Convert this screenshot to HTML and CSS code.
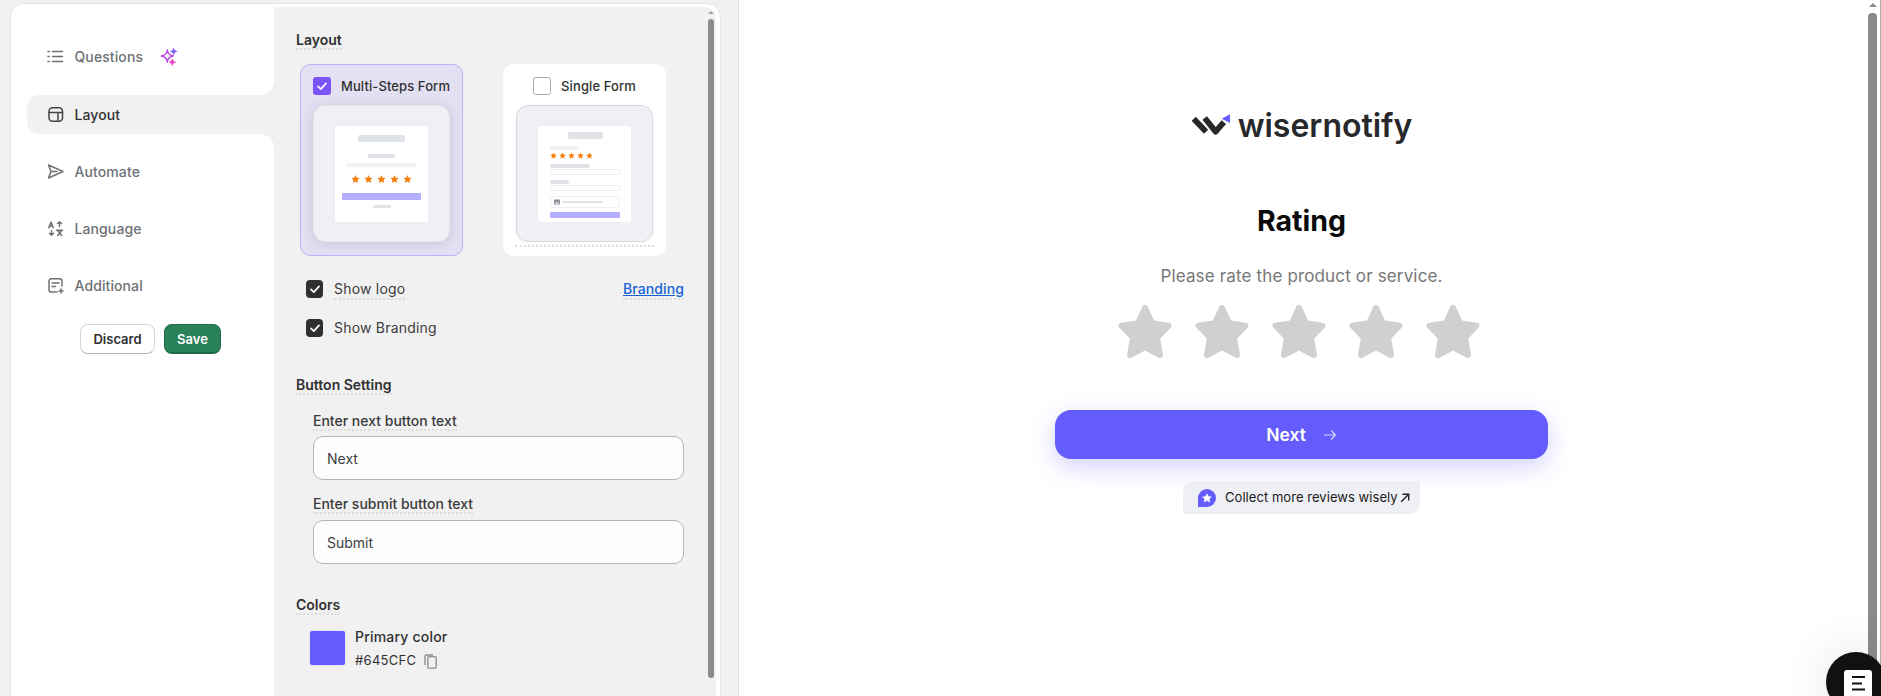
FILE: index.html
```html
<!DOCTYPE html>
<html lang="en">
<head>
    <meta charset="UTF-8">
    <meta name="viewport" content="width=device-width, initial-scale=1.0">
    <title>Rating form builder</title>
    <link rel="stylesheet" href="styles.css">
</head>
<body>
    <svg class="sprites" width="0" height="0">
        <symbol id="mini-star" viewBox="0 0 24 24">
            <polygon points="12,1.5 15.3,8.6 23,9.6 17.3,14.9 18.8,22.5 12,18.7 5.2,22.5 6.7,14.9 1,9.6 8.7,8.6"/>
        </symbol>
        <symbol id="big-star" viewBox="0 0 54 54">
            <polygon points="27,3 34.05,18.3 50.5,20.6 39,32.5 42,50 27,42 12,50 15,32.5 3.5,20.6 19.95,18.3" stroke-width="6" stroke-linejoin="round"/>
        </symbol>
        <symbol id="tick" viewBox="0 0 18 18">
            <path d="M5 9.4l2.8 2.7L13 6.4" fill="none" stroke="#fff" stroke-width="1.7" stroke-linecap="round" stroke-linejoin="round"/>
        </symbol>
    </svg>

    <div class="editor">
        <div class="card">
            <nav class="sidebar">
                <div class="nav-block nav-top">
                    <a class="nav-item">
                        <svg class="nav-icon" viewBox="0 0 17 17"><path d="M5.5 3.5h10M5.5 8.500h10M5.5 13.500h10M1 3.500h1.200M1 8.500h1.200M1 13.500h1.200"/></svg>
                        Questions
                        <svg class="sparkle" viewBox="0 0 18 18">
                            <path d="M7.3 2Q8 7.3 13.3 8 8 8.700 7.300 14 6.600 8.700 1.300 8 6.600 7.300 7.300 2Z" fill="none" stroke="#b743e8" stroke-width="1.400" stroke-linejoin="round"/>
                            <path d="M13.7 0Q14.100 3 17.200 3.400 14.100 3.800 13.700 6.800 13.300 3.800 10.300 3.400 13.300 3 13.700 0Z" fill="#7a5cf5" stroke="#7a5cf5" stroke-width="0.5"/>
                            <path d="M12.3 10.800Q12.700 13.800 15.800 14.200 12.700 14.600 12.300 17.600 11.900 14.600 8.900 14.200 11.900 13.800 12.300 10.800Z" fill="#ee3bc4" stroke="#ee3bc4" stroke-width="0.5"/>
                        </svg>
                    </a>
                </div>
                <div class="nav-active-row">
                    <a class="nav-item active">
                        <svg class="nav-icon" viewBox="0 0 17 17"><rect x="2" y="1.800" width="13.500" height="13.500" rx="3.500"/><path d="M2 6.500h13.500M11 6.500v8.800"/></svg>
                        Layout
                    </a>
                </div>
                <div class="nav-block nav-bottom">
                    <a class="nav-item">
                        <svg class="nav-icon" viewBox="0 0 17 17"><path d="M1.500 2l14.500 6.500L1.500 15 4 8.500zM4 8.500h6"/></svg>
                        Automate
                    </a>
                    <a class="nav-item">
                        <svg class="nav-icon" viewBox="0 0 17 17"><path d="M1.800 7.800L4 2l2.200 5.800M2.600 6h2.800M12.500 6.500V1.800M10.500 3.500l2-1.800 2 1.800M4.500 15.300v-4.500M2.500 13.300l2 1.800 2-1.800M9.500 10.300h6M10.700 10.500l4 5M14.700 10.500l-4 5"/></svg>
                        Language
                    </a>
                    <a class="nav-item">
                        <svg class="nav-icon" viewBox="0 0 17 17"><path d="M15 9V4a2.200 2.200 0 0 0-2.200-2.200H4.200A2.200 2.200 0 0 0 2 4v8.800A2.200 2.200 0 0 0 4.200 15H10M5 6h7M5 9.500h3.500M14 12v4M12 14h4"/></svg>
                        Additional
                    </a>
                    <div class="actions">
                        <button class="btn btn-discard">Discard</button>
                        <button class="btn btn-save">Save</button>
                    </div>
                </div>
            </nav>

            <div class="content">
                <div class="form">
                    <h2 class="heading dotted">Layout</h2>
                    <div class="layout-options">
                        <div class="layout-card selected">
                            <div class="layout-title">
                                <span class="layout-check on"><svg><use href="#tick"/></svg></span>
                                Multi-Steps Form
                            </div>
                            <div class="preview">
                                <div class="sheet sheet-multi">
                                    <i class="bar m-title"></i>
                                    <i class="bar m-small"></i>
                                    <i class="bar m-long"></i>
                                    <div class="mini-stars m-stars">
                                        <svg><use href="#mini-star"/></svg><svg><use href="#mini-star"/></svg><svg><use href="#mini-star"/></svg><svg><use href="#mini-star"/></svg><svg><use href="#mini-star"/></svg>
                                    </div>
                                    <i class="bar m-button"></i>
                                    <i class="bar m-foot"></i>
                                </div>
                            </div>
                        </div>
                        <div class="layout-card">
                            <div class="layout-title">
                                <span class="layout-check"></span>
                                Single Form
                            </div>
                            <div class="preview preview-plain">
                                <div class="sheet sheet-single">
                                    <i class="bar s-title"></i>
                                    <i class="bar s-label1"></i>
                                    <div class="mini-stars s-stars">
                                        <svg><use href="#mini-star"/></svg><svg><use href="#mini-star"/></svg><svg><use href="#mini-star"/></svg><svg><use href="#mini-star"/></svg><svg><use href="#mini-star"/></svg>
                                    </div>
                                    <i class="bar s-label2"></i>
                                    <i class="s-input"></i>
                                    <i class="bar s-label3"></i>
                                    <i class="s-input"></i>
                                    <div class="s-upload">
                                        <svg viewBox="0 0 7 6"><rect width="7" height="6" rx="1" fill="#8e939a"/><path d="M1 5l1.800-2.300L4 4l1-1 1 2z" fill="#e6e7ea"/></svg>
                                        <i class="bar s-upload-line"></i>
                                    </div>
                                    <i class="s-button"></i>
                                </div>
                            </div>
                            <div class="dots-line"></div>
                        </div>
                    </div>

                    <div class="option-row first">
                        <span class="box"><svg><use href="#tick"/></svg></span>
                        <span class="option-label dotted">Show logo</span>
                        <a class="branding-link dotted">Branding</a>
                    </div>
                    <div class="option-row">
                        <span class="box"><svg><use href="#tick"/></svg></span>
                        <span class="option-label">Show Branding</span>
                    </div>

                    <h2 class="heading dotted heading-buttons">Button Setting</h2>
                    <div class="field">
                        <label class="field-label dotted">Enter next button text</label>
                        <input class="field-input" type="text" value="Next">
                    </div>
                    <div class="field field-second">
                        <label class="field-label dotted">Enter submit button text</label>
                        <input class="field-input" type="text" value="Submit">
                    </div>

                    <h2 class="heading dotted heading-colors">Colors</h2>
                    <div class="color-row">
                        <div class="swatch"></div>
                        <div class="color-text">
                            <div class="color-name">Primary color</div>
                            <div class="color-value">
                                #645CFC
                                <svg class="copy-icon" viewBox="0 0 13 15"><rect x="3.800" y="2.600" width="8.400" height="11.600" rx="1.300"/><path d="M1 11V2.200A1.300 1.300 0 0 1 2.300 1H9"/></svg>
                            </div>
                        </div>
                    </div>
                </div>
                <div class="scrollbar scrollbar-form">
                    <i class="scroll-arrow"></i>
                    <i class="scroll-thumb"></i>
                </div>
            </div>
        </div>
    </div>

    <div class="live-preview">
        <main class="rating-form">
            <div class="logo">
                <svg class="logo-mark" viewBox="0 0 114 66">
                    <path d="M8 13l36 38M40 11l32 40 24-28" fill="none" stroke="#27282b" stroke-width="17" stroke-linejoin="round"/>
                    <path d="M114 0L90 13l24 13z" fill="#645cfc"/>
                </svg>
                <span class="logo-text">wisernotify</span>
            </div>
            <h1 class="rating-title">Rating</h1>
            <p class="rating-sub">Please rate the product or service.</p>
            <div class="stars">
                <svg><use href="#big-star"/></svg>
                <svg><use href="#big-star"/></svg>
                <svg><use href="#big-star"/></svg>
                <svg><use href="#big-star"/></svg>
                <svg><use href="#big-star"/></svg>
            </div>
            <button class="next-btn">
                Next
                <svg viewBox="0 0 14 12"><path d="M1 6h11.500M8 1.500L12.500 6 8 10.500" fill="none" stroke="currentColor" stroke-width="1.200"/></svg>
            </button>
            <a class="brand-pill">
                <svg class="pill-icon" viewBox="0 0 18 18"><path d="M9 0a9 9 0 0 1 0 18H0V9a9 9 0 0 1 9-9z" fill="#645cfc"/><polygon points="9,4.200 10.500,7.300 13.900,7.700 11.400,10 12.100,13.400 9,11.700 5.900,13.400 6.600,10 4.100,7.700 7.500,7.300" fill="#fff"/></svg>
                <span class="pill-text">Collect more reviews wisely</span>
                <svg class="pill-arrow" viewBox="0 0 10 10"><path d="M1.200 8.800L8.500 1.500M2.500 1.300h6.200v6.200" fill="none" stroke="#222" stroke-width="1.400"/></svg>
            </a>
        </main>
        <div class="scrollbar scrollbar-page">
            <i class="scroll-arrow"></i>
            <i class="scroll-thumb"></i>
        </div>
    </div>

    <div class="chat-widget">
        <svg viewBox="0 0 28 30"><path d="M3 0h22a3 3 0 0 1 3 3v27H0V3a3 3 0 0 1 3-3z" fill="#fff"/><path d="M8 6h13v2H8zM8 12.500h10v2H8zM8 18.500h13v2H8z" fill="#111"/></svg>
    </div>
</body>
</html>
```

FILE: styles.css
```css
* {
    box-sizing: border-box;
}
html, body {
    height: 100%;
}
body {
    margin: 0;
    display: flex;
    overflow: hidden;
    background-color: #fff;
    font-family: Inter, "Liberation Sans", sans-serif;
    font-size: 14px;
    color: #303030;
}
.sprites {
    position: absolute;
}
i {
    display: block;
}
a {
    text-decoration: none;
}

/* left editor */
.editor {
    width: 739px;
    flex: none;
    height: 100%;
    padding: 3px 0 0 10px;
    background-color: #f1f1f1;
    border-right: 1px solid #dedede;
}
.card {
    width: 711px;
    height: 720px;
    display: flex;
    padding: 3px 4px 0 0;
    background-color: #fff;
    border: 1px solid #e3e3e3;
    border-radius: 14px;
}
.sidebar {
    width: 263px;
    flex: none;
    margin-top: -3px;
    background-color: #f1f1f1;
    border-top-left-radius: 13px;
    overflow: hidden;
}
.nav-block {
    background-color: #fff;
    padding-left: 16px;
}
.nav-top {
    padding-top: 33px;
    padding-bottom: 19px;
    border-bottom-right-radius: 14px;
}
.nav-bottom {
    padding-top: 18px;
    height: 600px;
    border-top-right-radius: 14px;
}
.nav-active-row {
    padding-left: 16px;
    background-color: #fff;
}
.nav-item {
    height: 39px;
    display: flex;
    align-items: center;
    gap: 10.5px;
    padding-left: 20px;
    margin-bottom: 18px;
    font-weight: 500;
    letter-spacing: 0.1px;
    color: #6d7175;
}
.nav-top .nav-item {
    margin-bottom: 0;
}
.nav-item.active {
    margin-bottom: 0;
    color: #303030;
    background-color: #f1f1f1;
    border-radius: 12px 0 0 12px;
}
.nav-icon {
    width: 17px;
    height: 17px;
    flex: none;
    fill: none;
    stroke: #6d7175;
    stroke-width: 1.5;
    stroke-linecap: round;
    stroke-linejoin: round;
}
.active .nav-icon {
    stroke: #444;
}
.sparkle {
    width: 18px;
    height: 18px;
    margin-left: 6px;
}
.actions {
    display: flex;
    gap: 9px;
    padding-left: 53px;
    margin-top: 19px;
}
.btn {
    height: 30px;
    border-radius: 8px;
    font-family: inherit;
    font-size: 13px;
    font-weight: 600;
    padding: 0;
}
.btn-discard {
    width: 75px;
    background-color: #fff;
    color: #303030;
    border: 1px solid #d4d4d4;
    border-bottom-color: #b5b5b5;
}
.btn-save {
    width: 57px;
    background-color: #2a8259;
    color: #fff;
    border: 1px solid #1f6b48;
    border-bottom-width: 2px;
}

/* form column */
.content {
    width: 442px;
    display: flex;
    background-color: #f1f1f1;
    border-top-right-radius: 12px;
}
.form {
    flex: 1;
    padding: 24px 0 0 22px;
}
.dotted {
    width: fit-content;
    border-bottom: 2px dotted #dcdcdc;
}
.heading {
    margin: 0;
    font-size: 14px;
    line-height: 17px;
    font-weight: 600;
    color: #303030;
}
.heading-buttons {
    margin-top: 39px;
}
.heading-colors {
    margin-top: 32px;
}
.layout-options {
    display: flex;
    gap: 40px;
    margin: 14px 0 0 4px;
}
.layout-card {
    width: 163px;
    height: 192px;
    padding: 12px;
    background-color: #fff;
    border: 1px solid #fff;
    border-radius: 10px;
}
.layout-card.selected {
    background-color: #e2e0f2;
    border-color: #b8b4fa;
}
.layout-title {
    height: 18px;
    display: flex;
    align-items: center;
    justify-content: center;
    gap: 10px;
    font-size: 13px;
    font-weight: 500;
    letter-spacing: 0.1px;
    white-space: nowrap;
}
.layout-check {
    width: 18px;
    height: 18px;
    flex: none;
    background-color: #fff;
    border: 1px solid #aaa;
    border-radius: 3px;
}
.layout-check.on {
    background-color: #7c52fb;
    border: 0;
}
.layout-check svg, .box svg {
    display: block;
    width: 18px;
    height: 18px;
}
.preview {
    width: 137px;
    height: 137px;
    margin-top: 10px;
    display: flex;
    align-items: center;
    justify-content: center;
    background-color: #eef0f5;
    border: 1px solid #e6e7ec;
    border-radius: 12px;
    box-shadow: 0 2px 12px rgba(0, 0, 0, 0.12);
}
.preview-plain {
    border-color: #d9dade;
    box-shadow: 0 1px 4px rgba(0, 0, 0, 0.04);
}
.sheet {
    width: 93px;
    height: 96px;
    display: flex;
    flex-direction: column;
    background-color: #fff;
    border-radius: 3px;
}
.sheet-multi {
    align-items: center;
    padding-top: 9px;
}
.sheet-single {
    padding: 6px 11px 0 12px;
}
.bar {
    height: 4px;
    background-color: #dfe3e8;
    border-radius: 2px;
}
.mini-stars {
    display: flex;
    fill: #f47f0a;
}
.m-title {
    width: 47px;
    height: 7px;
}
.m-small {
    width: 27px;
    margin-top: 12px;
    border-radius: 0;
}
.m-long {
    width: 71px;
    margin-top: 5px;
    background-color: #f1f2f4;
}
.m-stars {
    gap: 4px;
    margin-top: 6px;
}
.m-stars svg {
    width: 9px;
    height: 12px;
}
.m-button {
    width: 79px;
    height: 7px;
    margin-top: 8px;
    background-color: #b3aeff;
    border-radius: 0;
}
.m-foot {
    width: 18px;
    height: 3px;
    margin-top: 5px;
}
.s-title {
    width: 35px;
    height: 7px;
    align-self: center;
}
.s-label1 {
    width: 29px;
    margin-top: 7px;
    background-color: #f0f1f3;
}
.s-stars {
    gap: 2px;
    margin-top: 2px;
}
.s-stars svg {
    width: 7px;
    height: 7px;
}
.s-label2 {
    width: 40px;
    margin-top: 5px;
}
.s-label3 {
    width: 19px;
    margin-top: 5px;
}
.s-input {
    height: 6px;
    margin-top: 1px;
    border: 1px solid #f0f0f2;
    border-radius: 1px;
}
.s-upload {
    height: 12px;
    margin-top: 5px;
    display: flex;
    align-items: center;
    gap: 2px;
    padding-left: 3px;
    border: 1px solid #f0f0f2;
    border-radius: 1px;
}
.s-upload svg {
    width: 6px;
    height: 6px;
}
.s-upload-line {
    width: 41px;
    height: 2px;
}
.s-button {
    height: 6px;
    margin-top: 4px;
    background-color: #b3aeff;
}
.dots-line {
    margin: 3px -1px 0;
    border-top: 2px dotted #dcdcdc;
}
.option-row {
    width: 388px;
    height: 18px;
    display: flex;
    align-items: flex-start;
    gap: 11px;
    margin-top: 21px;
    padding-left: 10px;
}
.option-row.first {
    margin-top: 24px;
}
.box {
    width: 17px;
    height: 18px;
    flex: none;
    background-color: #303030;
    border-radius: 4px;
}
.option-label {
    line-height: 18px;
    letter-spacing: 0.2px;
    color: #3d3d3d;
}
.branding-link {
    margin-left: auto;
    line-height: 17px;
    padding-bottom: 1px;
    color: #1763d6;
    font-weight: 500;
    letter-spacing: 0.1px;
    text-decoration: underline;
}
.field {
    margin: 17px 0 0 17px;
}
.field-second {
    margin-top: 15px;
}
.field-label {
    display: block;
    line-height: 17px;
    margin-bottom: 5px;
    font-weight: 500;
    color: #3a3a3a;
}
.field-second .field-label {
    margin-bottom: 6px;
}
.field-input {
    display: block;
    width: 371px;
    height: 44px;
    padding: 0 13px;
    font-family: inherit;
    font-size: 14px;
    color: #3d3d3d;
    background-color: #fdfdfd;
    border: 1px solid #b5b5b5;
    border-radius: 10px;
}
.color-row {
    display: flex;
    gap: 9px;
    margin: 15px 0 0 13px;
}
.swatch {
    width: 37px;
    height: 36px;
    background-color: #645cfc;
    border: 1px solid #e6e6f0;
    border-radius: 3px;
}
.color-text {
    margin-top: -2px;
    font-weight: 500;
    line-height: 17px;
}
.color-name {
    letter-spacing: 0.2px;
}
.color-value {
    display: flex;
    align-items: center;
    gap: 8px;
    margin-top: 7px;
    font-size: 13px;
    font-weight: 400;
    letter-spacing: 0.3px;
}
.copy-icon {
    width: 13px;
    height: 15px;
    margin-top: 2px;
    fill: none;
    stroke: #8a8a8a;
    stroke-width: 1.3;
}

/* fake scrollbars */
.scrollbar {
    flex: none;
    display: flex;
    flex-direction: column;
    align-items: center;
}
.scrollbar-form {
    width: 6px;
    margin-right: 2px;
    padding-top: 4px;
}
.scrollbar-form .scroll-arrow {
    border: 3px solid transparent;
    border-top-width: 0;
    border-bottom: 3px solid #a5a5a5;
}
.scrollbar-form .scroll-thumb {
    width: 6px;
    height: 659px;
    margin-top: 5px;
    background-color: #8b8b8b;
    border-radius: 3px;
}
.scrollbar-page {
    width: 14px;
    padding: 3px 3px 0 1px;
    border-right: 1px solid #b0b0b0;
}
.scrollbar-page .scroll-arrow {
    border: 4px solid transparent;
    border-top-width: 0;
    border-bottom: 4px solid #8b8b8b;
}
.scrollbar-page .scroll-thumb {
    width: 9px;
    flex: 1;
    margin-top: 6px;
    background-color: #8b8b8b;
    border-radius: 4px 4px 0 0;
}

/* right preview */
.live-preview {
    flex: 1;
    display: flex;
}
.rating-form {
    flex: 1;
    display: flex;
    flex-direction: column;
    align-items: center;
    padding: 105px 3px 0 0;
}
.logo {
    height: 40px;
    display: flex;
    align-items: center;
    gap: 8px;
}
.logo-mark {
    width: 39px;
    height: 23px;
}
.logo-text {
    font-size: 32px;
    font-weight: 600;
    color: #27282b;
}
.rating-title {
    margin: 58px 0 0;
    font-size: 28.5px;
    line-height: 36px;
    font-weight: 700;
    color: #0a0a0a;
}
.rating-sub {
    margin: 26px 0 0;
    font-size: 17px;
    line-height: 22px;
    letter-spacing: 0.15px;
    color: #777;
}
.stars {
    display: flex;
    gap: 23px;
    margin-top: 18px;
    padding-right: 5px;
    fill: #d0d0d0;
    stroke: #d0d0d0;
}
.stars svg {
    width: 54px;
    height: 54px;
}
.next-btn {
    width: 493px;
    height: 49px;
    margin-top: 51px;
    display: flex;
    align-items: center;
    justify-content: center;
    gap: 17px;
    font-family: inherit;
    font-size: 17.5px;
    font-weight: 600;
    color: #fff;
    background-color: #645cfc;
    border: 0;
    border-radius: 16px;
    box-shadow: 0 8px 24px rgba(100, 92, 252, 0.28);
}
.next-btn svg {
    width: 14px;
    height: 12px;
    color: #d8d6ff;
}
.brand-pill {
    width: 237px;
    height: 33px;
    margin-top: 22px;
    display: flex;
    align-items: center;
    padding-left: 15px;
    font-size: 13px;
    color: #1a1a1a;
    white-space: nowrap;
    background-color: #eff0f5;
    border-radius: 10px 0 10px 0;
}
.pill-text {
    margin-top: -2px;
    letter-spacing: 0.05px;
}
.pill-icon {
    width: 18px;
    height: 18px;
    margin-right: 9px;
}
.pill-arrow {
    width: 10px;
    height: 10px;
    margin-left: 2px;
}
.chat-widget {
    position: absolute;
    right: -5px;
    bottom: -16px;
    width: 60px;
    height: 60px;
    padding: 18px 0 0 18px;
    background-color: #111;
    border-radius: 50%;
    box-shadow: 0 0 50px rgba(0, 0, 0, 0.12);
}
.chat-widget svg {
    display: block;
    width: 28px;
    height: 30px;
}
```
